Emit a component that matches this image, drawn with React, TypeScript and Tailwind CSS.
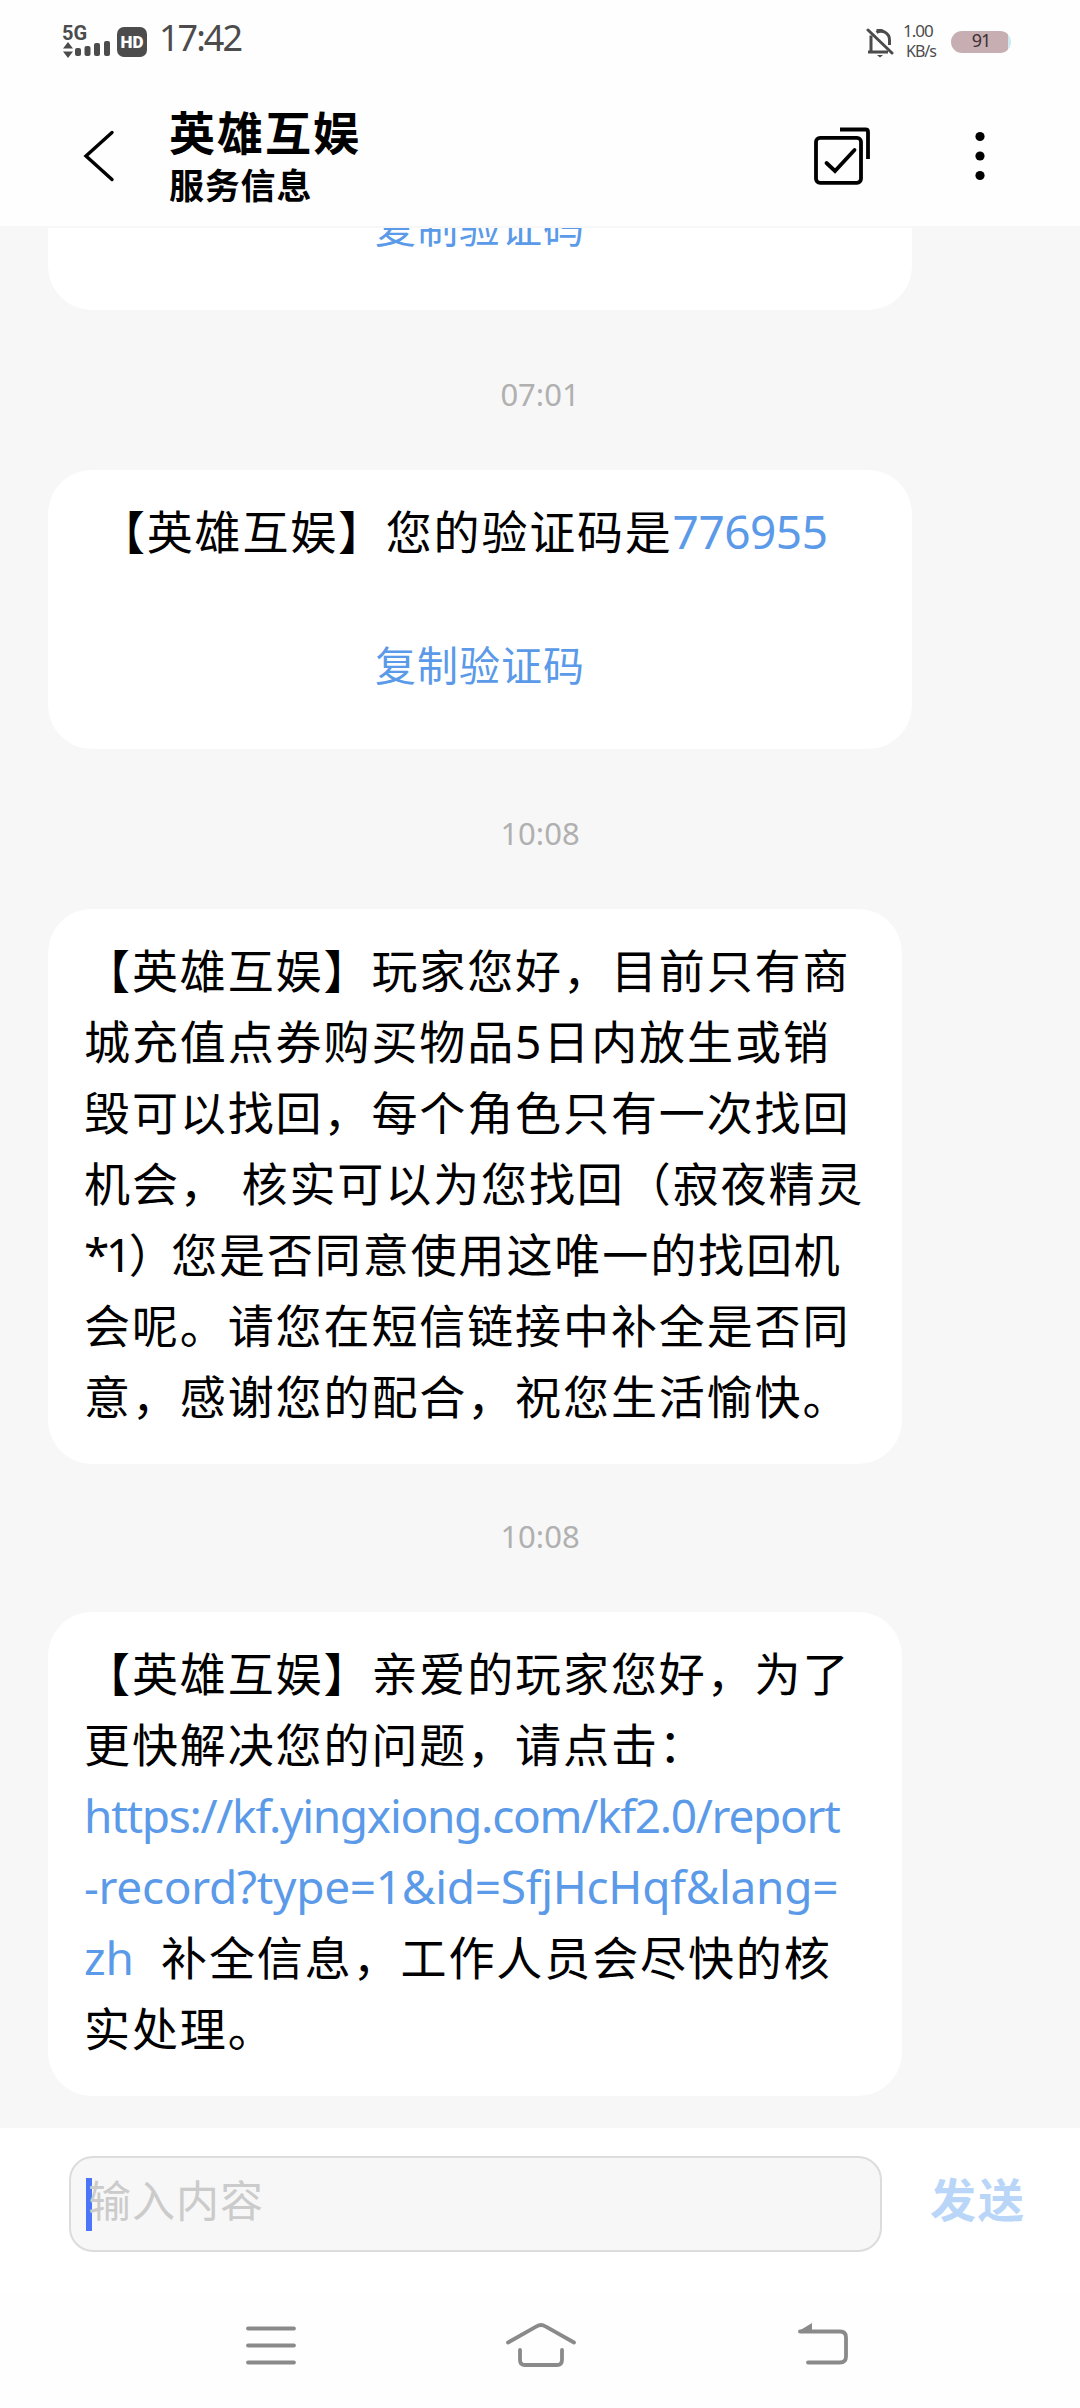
import type { ReactNode } from 'react'

interface Message {
  time: string
  lines: ReactNode[]
}

const MESSAGES: Message[] = [
  {
    time: '10:08',
    lines: [
      '【英雄互娱】玩家您好，目前只有商',
      '城充值点券购买物品5日内放生或销',
      '毁可以找回，每个角色只有一次找回',
      '机会， 核实可以为您找回（寂夜精灵',
      <>
        <span className="tracking-[-3.5px]">*1）</span>您是否同意使用这唯一的找回机
      </>,
      '会呢。请您在短信链接中补全是否同',
      '意，感谢您的配合，祝您生活愉快。',
    ],
  },
  {
    time: '10:08',
    lines: [
      '【英雄互娱】亲爱的玩家您好，为了',
      '更快解决您的问题，请点击：',
      <Link className="tracking-[-1.3px]">https://kf.yingxiong.com/kf2.0/report</Link>,
      <Link className="tracking-[-0.3px]">-record?type=1&id=SfjHcHqf&lang=</Link>,
      <>
        <Link className="mr-[27px] tracking-[0px]">zh</Link>
        补全信息，工作人员会尽快的核
      </>,
      '实处理。',
    ],
  },
]

function Link({ className, children }: { className?: string; children: ReactNode }) {
  return <span className={`text-[#5b9ae8] ${className ?? ''}`}>{children}</span>
}

function StatusBar() {
  return (
    <div className="flex h-[84px] shrink-0 items-start pr-[69px] pl-[62px] text-[#4c4c4c]">
      <div className="mt-6 h-[36px] w-[50px]">
        <div className="h-[17px] font-['Roboto'] text-[20px] leading-[18px] font-bold">5G</div>
        <svg className="block h-[18px] w-[50px]" viewBox="0 0 50 18" fill="currentColor">
          <path d="M6 1l5 6.5H1zM6 17L1 10.5h10z" />
          <rect x="13" y="7" width="6" height="8" rx="2" />
          <rect x="22.500" y="5" width="6" height="10" rx="2" />
          <rect x="32" y="2" width="6" height="13" rx="2" />
          <rect x="42" y="0" width="6" height="15" rx="2" />
        </svg>
      </div>
      <div className="mt-[27px] ml-[5px] flex h-[30px] w-[30px] items-center justify-center rounded-[7px] bg-[#4c4c4c] font-['Roboto'] text-[17px] leading-none font-black text-white">
        HD
      </div>
      <div className="mt-4 ml-[12px] text-[36px] leading-[44px] tracking-[-2px]">17:42</div>

      <svg className="mt-[27px] ml-auto h-[32px] w-[28px]" viewBox="0 0 28 32" fill="none" stroke="currentColor" strokeWidth={3}>
        <path d="M2 3l24 23" strokeLinecap="round" />
        <path d="M5 8.500V25h17M4 25h-2M10.500 5.500C16 2 23.500 6 23.500 13v5" />
        <path d="M11 28h6l-3 2.500z" fill="currentColor" stroke="none" />
        <path d="M10.500 3.500h6" />
      </svg>
      <div className="mt-[20px] ml-[9px] w-[34px] text-[17px] leading-[21px]">
        <div className="tracking-[-1px]">1.00</div>
        <div className="pl-[3px] text-[16px] tracking-[-1px]">KB/s</div>
      </div>
      <div className="mt-[31px] ml-[14px] flex h-[22px] w-[60px] items-center justify-center rounded-[11px] bg-[linear-gradient(90deg,#c6aeb2_95%,#cdeaf0_95%)] pb-[5px] text-[18px] leading-none tracking-[-1px] text-[#3f3033]">
        91
      </div>
    </div>
  )
}

function Header() {
  return (
    <div className="flex h-[142px] shrink-0 text-black">
      <svg className="mt-[44px] ml-[82px] h-[56px] w-[34px]" viewBox="0 0 34 56" fill="none" stroke="currentColor" strokeWidth={3.4} strokeLinecap="round">
        <path d="M30 4.500L4 28l26 23.500" />
      </svg>
      <div className="ml-[53px] font-bold">
        <div className="mt-[20px] text-[46px] leading-[56px] tracking-[2px]">英雄互娱</div>
        <div className="mt-[4px] text-[35px] leading-[44px] tracking-[0.8px]">服务信息</div>
      </div>
      <svg className="mt-[41px] ml-auto h-[62px] w-[60px]" viewBox="0 0 60 62" fill="none" stroke="currentColor" strokeWidth={3.8}>
        <rect x="4" y="12.800" width="45" height="45" rx="4" />
        <path d="M28 4.500h25.500q2.500 0 2.500 2.500v27" strokeLinejoin="round" />
        <path d="M14.500 38l8.500 8 19.500-21" strokeLinecap="round" />
      </svg>
      <svg className="mt-[42px] mr-[89px] ml-[99px] h-[60px] w-[20px]" viewBox="0 0 20 60" fill="currentColor">
        <circle cx="9" cy="10.500" r="4.600" />
        <circle cx="9" cy="30" r="4.600" />
        <circle cx="9" cy="49.500" r="4.600" />
      </svg>
    </div>
  )
}

function Timestamp({ children }: { children: ReactNode }) {
  return (
    <div className="flex shrink-0 items-center justify-center text-[31px] leading-none text-[#b0b0b0]">
      {children}
    </div>
  )
}

function CopyCode() {
  return (
    <div className="text-center text-[41px] leading-[60px] tracking-[1px] text-[#5b9ae8]">复制验证码</div>
  )
}

function Composer() {
  return (
    <div className="flex h-[166px] shrink-0 items-start bg-white pt-[28px] pl-[69px]">
      <div className="flex h-[96px] w-[813px] items-center rounded-[24px] border-2 border-[#dcdcdc] bg-[#f7f7f7] pl-[15px]">
        <div className="h-[53px] w-[6px] bg-[#4b75fb]" />
        <div className="-ml-[4px] pb-[6px] text-[43px] leading-[60px] tracking-[1px] text-[#cbcbcb]">输入内容</div>
      </div>
      <div className="mt-[13px] ml-[48px] text-[46px] leading-[60px] font-bold tracking-[2px] text-[#b9d6f8]">发送</div>
    </div>
  )
}

function NavBar() {
  return (
    <div className="flex h-[114px] shrink-0 pt-[22px] pl-[241px]">
      <svg className="h-[60px] w-[60px]" viewBox="0 0 60 60" stroke="#8a8a8a" strokeWidth={3.8} strokeLinecap="round">
        <path d="M7 12.500h46M7 29.500h46M7 46.500h46" />
      </svg>
      <svg className="ml-[200px] h-[60px] w-[80px]" viewBox="0 0 80 60" fill="none" stroke="#8a8a8a" strokeWidth={3.8} strokeLinecap="round">
        <path d="M7 26.500L35.500 10.500q4.500-3 9 0L73 26.500" />
        <path d="M19 34v10q0 5 5 5h32q5 0 5-5V34" />
      </svg>
      <svg className="ml-[211px] h-[60px] w-[60px]" viewBox="0 0 60 60" fill="none" stroke="#8a8a8a" strokeWidth={3.8} strokeLinecap="round">
        <path d="M8 15.500h40q6 0 6 6v19q0 6-6 6H16" />
        <path d="M20 7v8.500H6z" fill="#8a8a8a" stroke="none" />
      </svg>
    </div>
  )
}

export default function App() {
  return (
    <div className="flex h-[2408px] w-[1080px] flex-col overflow-hidden bg-[#fefefe] font-['Noto_Sans','Noto_Sans_CJK_SC',sans-serif]">
      <StatusBar />
      <Header />

      <main className="flex h-[1902px] shrink-0 flex-col items-stretch overflow-hidden bg-[#f7f7f7] pt-[2px]">
        {/* Tail of the message scrolled under the header */}
        <div className="ml-[48px] flex h-[82px] w-[864px] shrink-0 flex-col justify-end overflow-hidden rounded-b-[44px] bg-white pb-[53px]">
          <CopyCode />
        </div>

        <div className="flex h-[160px] shrink-0 items-center justify-center pt-[9px]">
          <Timestamp>07:01</Timestamp>
        </div>
        <div className="ml-[48px] h-[279px] w-[864px] shrink-0 rounded-[44px] bg-white pt-[26px]">
          <div className="pl-[51px] text-[46px] leading-[71px] tracking-[1.8px] text-black">
            【英雄互娱】您的验证码是<Link className="tracking-[-0.5px]">776955</Link>
          </div>
          <div className="mt-[68px]">
            <CopyCode />
          </div>
        </div>

        {MESSAGES.map((message, i) => (
          <div key={i} className="shrink-0">
            <div className={i === 0 ? 'flex h-[160px] items-center justify-center pt-[9px]' : 'flex h-[148px] items-center justify-center pb-[3px]'}>
              <Timestamp>{message.time}</Timestamp>
            </div>
            <div className="ml-[48px] w-[854px] rounded-[44px] bg-white pt-[26px] pb-[32px] pl-[36px] text-[46px] leading-[71px] tracking-[1.9px] whitespace-pre text-black">
              {message.lines.map((line, j) => (
                <div key={j} className="h-[71px]">{line}</div>
              ))}
            </div>
          </div>
        ))}
      </main>

      <Composer />
      <NavBar />
    </div>
  )
}
